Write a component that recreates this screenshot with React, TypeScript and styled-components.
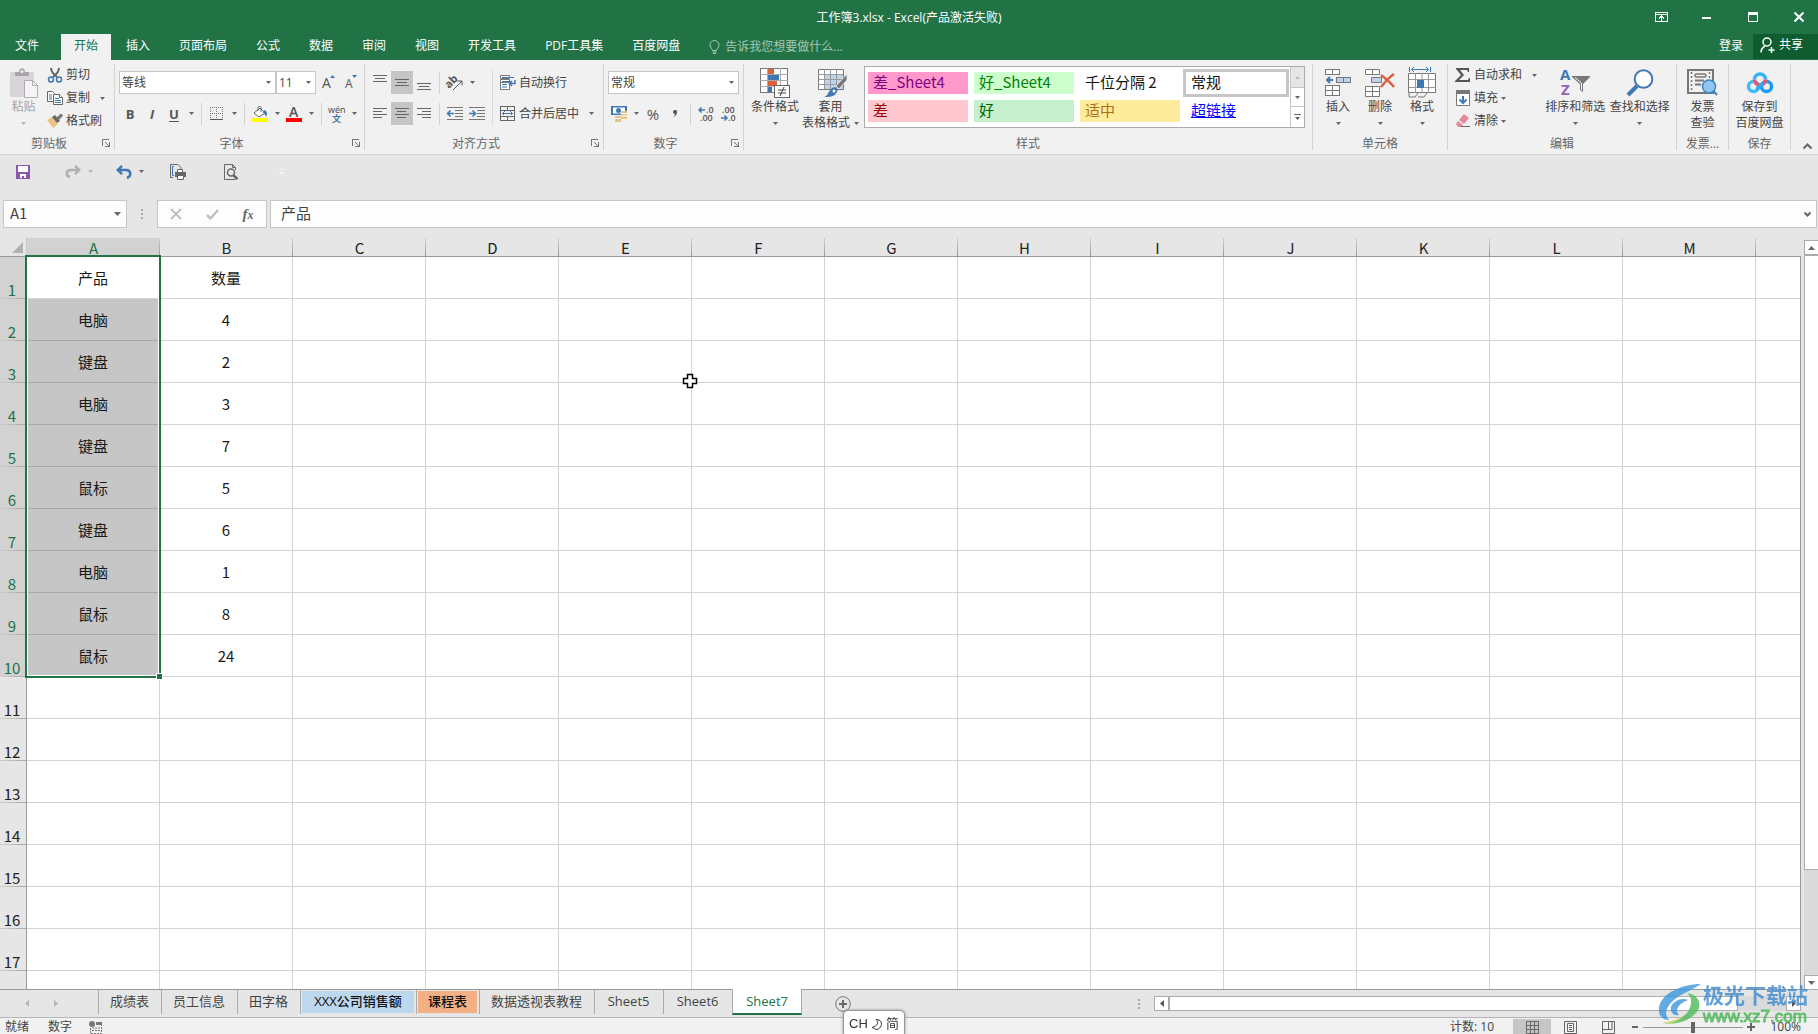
import React from "react";
import styled, { createGlobalStyle, css } from "styled-components";

const GlobalStyle = createGlobalStyle`
  *, *::before, *::after { box-sizing: border-box; }
  html, body { margin: 0; height: 100%; }
  body {
    overflow: hidden;
    background: #e6e6e6;
    color: #444;
    font-family: "Open Sans", "Noto Sans CJK SC", sans-serif;
    font-size: 12px;
    line-height: 16px;
  }
  button, input, select { font: inherit; color: inherit; }
  button { padding: 0; border: 0; background: none; white-space: nowrap; }
  svg { display: block; flex: none; overflow: visible; }
`;

const GREEN = "#217346";
const BLUE = "#3f78b3";
const INK = "#666";
const SHEET_FONT = `"Noto Sans CJK SC", "Open Sans", sans-serif`;

/* ---------- shared pieces ---------- */

const Window = styled.div`
  display: flex;
  flex-direction: column;
  height: 100vh;
  overflow: hidden;
`;

const CaretShape = styled.svg<{ $muted?: boolean }>`
  fill: ${(p) => (p.$muted ? "#b5b5b5" : "#666")};
`;

const Caret = ({ muted }: { muted?: boolean }) => (
  <CaretShape $muted={muted} width="5" height="3" viewBox="0 0 5 3" aria-hidden="true">
    <path d="M0 0h5L2.5 3z" />
  </CaretShape>
);

/* ---------- title bar and tabs ---------- */

const TitleBar = styled.header`
  flex: none;
  display: grid;
  grid-template-columns: 1fr auto 1fr;
  align-items: center;
  height: 34px;
  background: ${GREEN};
  color: #fff;
`;

const Title = styled.h1`
  grid-column: 2;
  margin: 0;
  padding-top: 2px;
  font-size: 12px;
  font-weight: 400;
`;

const WindowControls = styled.div`
  display: flex;
  justify-content: flex-end;
  gap: 8px;
`;

const WindowButton = styled.button`
  display: grid;
  place-items: center;
  width: 38px;
  height: 32px;
  color: #fff;
`;

const TabBar = styled.nav`
  flex: none;
  display: flex;
  gap: 1px;
  height: 26px;
  background: ${GREEN};
  color: #fff;
`;

const RibbonTab = styled.button<{ $active?: boolean; $first?: boolean }>`
  padding: 0 14px 2px;
  color: #fff;
  ${(p) =>
    p.$first &&
    css`
      width: 60px;
      padding-right: 20px;
    `}
  ${(p) =>
    p.$active &&
    css`
      padding-right: 13px;
      padding-left: 13px;
      background: #f1f1f1;
      color: ${GREEN};
    `}
`;

const TellMe = styled.label`
  flex: 1;
  display: flex;
  align-items: center;
  gap: 5px;
  padding-left: 14px;
  color: #a6c7b5;
`;

const TellMeInput = styled.input`
  width: 160px;
  padding: 0;
  border: 0;
  outline: 0;
  background: none;
  &::placeholder {
    color: #a6c7b5;
    opacity: 1;
  }
`;

const ShareButton = styled.button`
  display: flex;
  align-items: center;
  gap: 4px;
  width: 65px;
  height: 25px;
  margin-left: -5px;
  padding: 0 7px 3px;
  background: #0e5c2f;
  color: #fff;
`;

/* ---------- ribbon ---------- */

const Ribbon = styled.section`
  flex: none;
  display: flex;
  height: 95px;
  padding: 4px 0;
  border-bottom: 1px solid #d2d2d2;
  background: #f1f1f1;
`;

const Group = styled.section<{ $width?: number }>`
  display: flex;
  flex-direction: column;
  ${(p) => (p.$width ? `flex: none; width: ${p.$width}px;` : "flex: 1; min-width: 0;")}
  border-right: 1px solid #d2d2d2;
`;

const GroupBody = styled.div<{ $pad?: number }>`
  flex: 1;
  display: flex;
  padding: 0 ${(p) => p.$pad ?? 4}px;
`;

const GroupFooter = styled.div`
  display: flex;
  height: 14px;
  line-height: 16px;
  color: ${INK};
`;

const GroupLabel = styled.span`
  flex: 1;
  text-align: center;
`;

const LauncherButton = styled.button`
  width: 16px;
  display: grid;
  place-items: center;
`;

const RibbonGroup = ({
  label,
  width,
  launcher,
  pad,
  children,
}: {
  label: string;
  width?: number;
  launcher?: boolean;
  pad?: number;
  children: React.ReactNode;
}) => (
  <Group $width={width} aria-label={label}>
    <GroupBody $pad={pad}>{children}</GroupBody>
    <GroupFooter>
      <GroupLabel>{label}</GroupLabel>
      {launcher && (
        <LauncherButton aria-label={`${label}设置`}>
          <svg width="8" height="8" viewBox="0 0 8 8" fill="none" stroke="#777" shapeRendering="crispEdges">
            <path d="M.5 7V.5H7M3 3l4 4M7.500 3v4.500H3" />
          </svg>
        </LauncherButton>
      )}
    </GroupFooter>
  </Group>
);

const Stack = styled.div`
  display: flex;
  flex-direction: column;
  gap: 8px;
  padding-top: 7px;
`;

const Row = styled.div<{ $gap?: number }>`
  display: flex;
  align-items: center;
  gap: ${(p) => p.$gap ?? 0}px;
  height: 23px;
`;

const SmallStack = styled.div<{ $after?: number }>`
  display: flex;
  flex-direction: column;
  gap: 1px;
  margin-right: ${(p) => p.$after ?? 0}px;
  & > ${Row} {
    height: 22px;
  }
`;

const IconButton = styled.button<{ $on?: boolean }>`
  display: grid;
  place-items: center;
  width: 22px;
  height: 23px;
  background: ${(p) => (p.$on ? "#c5c5c5" : "none")};
`;

const CaretButton = styled.button`
  display: grid;
  place-items: center;
  width: 12px;
  height: 22px;
`;

const TextButton = styled.button<{ $short?: boolean }>`
  display: flex;
  align-items: center;
  gap: 3px;
  height: ${(p) => (p.$short ? 22 : 23)}px;
  padding: 0 3px;
`;

const Divider = styled.span`
  width: 1px;
  height: 22px;
  margin: 0 4px;
  background: #d2d2d2;
`;

const TallDivider = styled.span`
  width: 1px;
  height: 55px;
  margin: 6px 4px 0;
  background: #dadada;
`;

const BigButton = styled.button<{ $width: number; $muted?: boolean }>`
  display: flex;
  flex-direction: column;
  align-items: center;
  width: ${(p) => p.$width}px;
  padding-top: 2px;
  color: ${(p) => (p.$muted ? "#a6a6a6" : "#444")};
`;

const BigIcon = styled.span`
  display: grid;
  place-items: center;
  height: 33px;
`;

const BigLine = styled.span`
  display: flex;
  align-items: center;
  justify-content: center;
  gap: 4px;
  height: 16px;
`;

const Combo = styled.span<{ $width: number }>`
  display: grid;
  align-items: center;
  width: ${(p) => p.$width}px;
  & > select,
  & > svg {
    grid-area: 1 / 1;
  }
  & > svg {
    justify-self: end;
    margin-right: 5px;
    pointer-events: none;
  }
`;

const ComboSelect = styled.select`
  appearance: none;
  width: 100%;
  height: 23px;
  padding: 0 2px;
  border: 1px solid #c6c6c6;
  border-radius: 0;
  background: #fff;
`;

const ComboBox = ({ label, value, width }: { label: string; value: string; width: number }) => (
  <Combo $width={width}>
    <ComboSelect aria-label={label} defaultValue={value}>
      <option>{value}</option>
    </ComboSelect>
    <Caret />
  </Combo>
);

const Glyph = styled.span<{ $size: number; $bold?: boolean; $italic?: boolean; $under?: boolean }>`
  font-size: ${(p) => p.$size}px;
  line-height: 16px;
  font-weight: ${(p) => (p.$bold ? 700 : 400)};
  font-style: ${(p) => (p.$italic ? "italic" : "normal")};
  text-decoration: ${(p) => (p.$under ? "underline" : "none")};
  text-underline-offset: 2px;
  color: #555;
`;

/* ---------- style gallery ---------- */

const Gallery = styled.div`
  flex: 1;
  min-width: 0;
  display: flex;
  height: 62px;
  margin: 2px 3px 0 5px;
  border: 1px solid #ababab;
  background: #fff;
`;

const GalleryGrid = styled.div`
  flex: 1;
  min-width: 0;
  display: grid;
  grid-template-columns: repeat(4, 1fr);
  gap: 6px;
  padding: 5px 4px 5px 3px;
`;

const StyleItem = styled.button<{ $bg: string; $fg: string; $selected?: boolean; $link?: boolean }>`
  height: 22px;
  padding: 0 5px 2px;
  background: ${(p) => p.$bg};
  color: ${(p) => p.$fg};
  font-family: ${SHEET_FONT};
  font-size: 15px;
  line-height: 20px;
  text-align: left;
  text-decoration: ${(p) => (p.$link ? "underline" : "none")};
  outline: ${(p) => (p.$selected ? "3px solid #c6c6c6" : "0")};
`;

const GalleryScroll = styled.div`
  display: grid;
  grid-template-rows: 21px 19px 20px;
  width: 14px;
`;

const GalleryArrow = styled.button<{ $disabled?: boolean }>`
  display: grid;
  place-items: center;
  border-left: 1px solid #c6c6c6;
  border-bottom: 1px solid #c6c6c6;
  background: ${(p) => (p.$disabled ? "#e6e6e6" : "#fff")};
  &:last-child {
    border-bottom: 0;
  }
`;

const CollapseButton = styled.button`
  align-self: flex-end;
  width: 27px;
  height: 8px;
  padding-left: 5px;
  display: grid;
  place-items: center;
`;

/* ---------- quick access and formula bar ---------- */

const QuickBar = styled.div`
  flex: none;
  display: flex;
  align-items: center;
  height: 45px;
  padding: 0 12px 12px;
`;

const QuickItem = styled.div<{ $after: number }>`
  display: flex;
  align-items: center;
  margin-right: ${(p) => p.$after}px;
`;

const QuickButton = styled.button`
  display: grid;
  place-items: center;
  width: 22px;
  height: 22px;
`;

const FormulaBar = styled.div`
  flex: none;
  display: flex;
  height: 38px;
  padding: 0 1px 10px 3px;
`;

const NameBox = styled.div`
  display: flex;
  align-items: center;
  width: 124px;
  padding-right: 3px;
  border: 1px solid #c6c6c6;
  background: #fdfdfd;
`;

const BarInput = styled.input<{ $pad: number }>`
  flex: 1;
  min-width: 0;
  height: 26px;
  padding: 0 ${(p) => p.$pad}px 3px;
  border: 0;
  outline: 0;
  background: none;
  font-family: ${SHEET_FONT};
  font-size: 15px;
`;

const Grip = styled.span`
  display: grid;
  place-items: center;
  width: 30px;
`;

const EntryButtons = styled.div`
  display: flex;
  align-items: center;
  width: 110px;
  margin-right: 3px;
  border: 1px solid #c6c6c6;
  background: #fdfdfd;
`;

const EntryButton = styled.button`
  flex: 1;
  height: 26px;
  display: grid;
  place-items: center;
`;

const FormulaBox = styled(NameBox)`
  flex: 1;
  width: auto;
`;

const FxText = styled.span`
  font-family: "Liberation Serif", serif;
  font-size: 15px;
  font-style: italic;
  font-weight: 700;
  color: #666;
  & > small {
    font-size: 12px;
  }
`;

/* ---------- worksheet ---------- */

const SheetArea = styled.main`
  flex: 1;
  min-height: 0;
  display: flex;
  gap: 3px;
`;

const GridFrame = styled.div`
  position: relative;
  flex: 1;
  min-width: 0;
  overflow: hidden;
  border-bottom: 1px solid #999;
  &::after {
    content: "";
    position: absolute;
    inset: 18px 0 0 auto;
    width: 1px;
    background: #999;
  }
`;

const Sheet = styled.table`
  table-layout: fixed;
  width: 1889px;
  border-collapse: separate;
  border-spacing: 0;
  font-family: ${SHEET_FONT};
  font-size: 15px;
  line-height: 18px;
  color: #1a1a1a;
  th {
    font-weight: 400;
  }
  col:first-child {
    width: 27px;
  }
`;

const Corner = styled.th`
  height: 19px;
  padding: 0;
  border-right: 1px solid #c6c6c6;
  border-bottom: 1px solid #999;
  & > svg {
    margin-left: 12px;
  }
`;

const ColumnHead = styled.th<{ $active?: boolean }>`
  height: 19px;
  padding: 2px 0 0;
  border-bottom: 1px solid #999;
  background: linear-gradient(#d0d0d0, #999) right / 1px 100% no-repeat ${(p) => (p.$active ? "#d2d2d2" : "#e6e6e6")};
  color: ${(p) => (p.$active ? GREEN : "#222")};
  line-height: 16px;
`;

const RowHead = styled.th<{ $active?: boolean }>`
  height: 42px;
  padding: 0 2px 0 0;
  vertical-align: bottom;
  border-right: 1px solid #999;
  background: linear-gradient(90deg, #d0d0d0, #a5a5a5) bottom / 100% 1px no-repeat
    ${(p) => (p.$active ? "#d2d2d2" : "#e6e6e6")};
  color: ${(p) => (p.$active ? GREEN : "#222")};
`;

const Cell = styled.td<{ $selected?: boolean }>`
  height: 42px;
  padding: 0;
  border-right: 1px solid #d4d4d4;
  border-bottom: 1px solid ${(p) => (p.$selected ? "#a8a8a8" : "#d4d4d4")};
  background: ${(p) => (p.$selected ? "#c6c6c6" : "#fff")};
  text-align: center;
`;

const SelectionFrame = styled.div`
  position: absolute;
  left: 25px;
  top: 17px;
  width: 136px;
  height: 423px;
  border: 2px solid ${GREEN};
  box-shadow: inset 0 0 0 1px #fff;
  pointer-events: none;
  &::after {
    content: "";
    position: absolute;
    right: -4px;
    bottom: -4px;
    width: 7px;
    height: 7px;
    border: 1px solid #fff;
    background: ${GREEN};
  }
`;

const Pointer = styled.svg`
  position: absolute;
  left: 682px;
  top: 135px;
`;

const VerticalScroll = styled.div`
  flex: none;
  display: flex;
  flex-direction: column;
  width: 14px;
  padding-top: 2px;
  background: #dadada;
  box-shadow: inset 0 2px #e6e6e6;
`;

const ScrollArrow = styled.button`
  flex: none;
  display: grid;
  place-items: center;
  width: 15px;
  height: 15px;
  border: 1px solid #ababab;
  background: #fff;
`;

const VerticalThumb = styled.div`
  flex: 0 1 82%;
  width: 15px;
  border: 1px solid #ababab;
  background: #fff;
`;

const Spacer = styled.span`
  flex: 1;
`;

/* ---------- sheet tabs ---------- */

const TabStrip = styled.div`
  flex: none;
  display: flex;
  height: 28px;
  padding-right: 17px;
  border-bottom: 1px solid #b5b5b5;
`;

const SheetNav = styled.div`
  display: flex;
  align-items: center;
  gap: 25px;
  width: 99px;
  height: 24px;
  padding: 2px 25px 0;
  border-right: 1px solid #ababab;
`;

const SheetTab = styled.button<{ $fill?: string; $min?: number }>`
  height: 24px;
  min-width: ${(p) => p.$min ?? 63}px;
  padding: 0 2px 0 1px;
  border-right: 1px solid #ababab;
  font-size: 13px;
  line-height: 20px;
  color: ${(p) => (p.$fill ? "#111" : "#444")};
  & > span {
    display: block;
    height: 22px;
    padding: 0 10px;
    background: ${(p) => p.$fill ?? "none"};
    font-weight: ${(p) => (p.$fill ? 500 : 400)};
  }
`;

const ActiveSheetTab = styled.button`
  width: 70px;
  height: 26px;
  margin-top: -1px;
  margin-left: -1px;
  z-index: 1;
  border: 1px solid #ababab;
  border-top: 0;
  border-bottom: 2px solid ${GREEN};
  background: #fff;
  color: ${GREEN};
  font-size: 13px;
`;

const AddSheet = styled.button`
  width: 16px;
  margin-left: 33px;
`;

const HorizontalScroll = styled.div`
  display: flex;
  align-self: center;
  width: 647px;
  background: #dadada;
`;

const HorizontalThumb = styled.div`
  width: 569px;
  height: 15px;
  border: 1px solid #ababab;
  background: #fff;
`;

/* ---------- status bar ---------- */

const StatusBar = styled.footer`
  flex: none;
  display: flex;
  align-items: center;
  height: 16px;
  padding: 2px 17px 0 5px;
  background: #f1f1f1;
`;

const StatusText = styled.span<{ $after: number }>`
  margin-right: ${(p) => p.$after}px;
`;

const ViewButton = styled.button<{ $on?: boolean }>`
  display: grid;
  place-items: center;
  width: 38px;
  height: 16px;
  background: ${(p) => (p.$on ? "#c6c6c6" : "none")};
`;

const ZoomButton = styled.button`
  display: grid;
  place-items: center;
  width: 16px;
  height: 16px;
`;

const ZoomSlider = styled.input`
  appearance: none;
  width: 100px;
  height: 12px;
  margin: 0;
  background: linear-gradient(#999, #999) center / 100% 1px no-repeat;
  &::-webkit-slider-thumb {
    appearance: none;
    width: 4px;
    height: 11px;
    background: #666;
  }
`;

const ZoomValue = styled.span`
  width: 42px;
  text-align: right;
`;

/* ---------- floating items ---------- */

const ImeBadge = styled.div`
  position: fixed;
  left: 843px;
  bottom: -4px;
  z-index: 2;
  display: flex;
  align-items: center;
  justify-content: center;
  gap: 4px;
  width: 62px;
  height: 28px;
  border: 1px solid #999;
  border-radius: 5px;
  background: #fff;
  box-shadow: 0 0 3px #888;
  color: #333;
  font-family: "Liberation Sans", "Noto Sans CJK SC", sans-serif;
  font-size: 13px;
`;

const Watermark = styled.div`
  position: fixed;
  right: 10px;
  bottom: 8px;
  z-index: 3;
  display: flex;
  align-items: center;
  gap: 1px;
  opacity: 0.8;
  pointer-events: none;
`;

const WatermarkText = styled.div`
  display: flex;
  flex-direction: column;
  color: #3d8ad0;
  font-size: 21px;
  font-weight: 700;
  line-height: 26px;
`;

const WatermarkSite = styled.span`
  color: #46b552;
  font-family: "Liberation Sans", sans-serif;
  font-size: 17px;
  font-weight: 400;
  line-height: 18px;
  -webkit-text-stroke: 1px #46b552;
`;

/* ---------- icons ---------- */

const Lines = ({ rows, w = 14, h = 13 }: { rows: [number, number, number][]; w?: number; h?: number }) => (
  <svg width={w} height={h} fill="#666" shapeRendering="crispEdges" aria-hidden="true">
    {rows.map(([x, y, l], i) => (
      <rect key={i} x={x} y={y} width={l} height="1" />
    ))}
  </svg>
);

const PasteIcon = () => (
  <svg width="30" height="32" viewBox="0 0 30 32">
    <rect x="1" y="5" width="24" height="25" rx="1" fill="#d9d4d9" />
    <path d="M6 9V5h4c0-5 6-5 6 0h4v4z" fill="#a6a6a6" />
    <circle cx="13" cy="4.500" r="1.500" fill="#f1f1f1" />
    <path d="M15.500 13.500h8l5 5v12h-13z" fill="#f7f2f8" stroke="#b0abb0" />
    <path d="M23.500 13.500v5h5" fill="none" stroke="#b0abb0" />
  </svg>
);
const CutIcon = () => (
  <svg width="16" height="16" viewBox="0 0 16 16" fill="none">
    <path d="M4 1c0 3 1 5 6 9M12 1c0 3-1 5-6 9" stroke="#666" strokeWidth="2" />
    <circle cx="4" cy="12.500" r="2.500" stroke={BLUE} strokeWidth="1.500" />
    <circle cx="12" cy="12.500" r="2.500" stroke={BLUE} strokeWidth="1.500" />
  </svg>
);
const CopyIcon = () => (
  <svg width="16" height="16" viewBox="0 0 16 16" fill="#fff" stroke="#666">
    <path d="M.5 1.500h5l2 2v8h-7z" />
    <path d="M2 5h3M2 7h3M2 9h3" stroke={BLUE} />
    <path d="M6.500 4.500h6l3 3v7h-9z" />
    <path d="M12.500 4.500v3h3" />
    <path d="M8 8.500h4M8 10.500h6M8 12.500h6" stroke={BLUE} />
  </svg>
);
const BrushIcon = () => (
  <svg width="16" height="16" viewBox="0 0 16 16">
    <path d="M0 7l5-3 6 7-5 4z" fill="#eac282" />
    <path d="M5 4l3-2 5 6-3 2z" fill="#666" />
    <path d="M9 5l5-4.500 2 2L12 7z" fill="#777" />
  </svg>
);
const BordersIcon = () => (
  <svg width="14" height="14" viewBox="0 0 14 14" fill="none" stroke="#777" shapeRendering="crispEdges">
    <path d="M.5 0v13M6.500 0v13M12.500 0v13M0 .5h13M0 6.500h13" strokeDasharray="1 1" />
    <path d="M0 12.500h13" stroke="#555" />
  </svg>
);
const FillIcon = () => (
  <svg width="16" height="16" viewBox="0 0 16 16">
    <path d="M2 7l6-5 5 5-6 4z" fill="#fff" stroke="#666" />
    <path d="M6 5V1.500c0-1.500 3-1.500 3 0V6" fill="none" stroke="#666" />
    <path d="M12 4c3 1 4 3 2 7-1-3-2-4-3-4z" fill={BLUE} />
    <path d="M0 12h16v4H0z" fill="#ff0" />
  </svg>
);
const OrientationIcon = () => (
  <svg width="18" height="18" viewBox="0 0 18 18" fill="none" stroke="#555">
    <text x="0" y="12" fill="#555" stroke="none" fontSize="11" fontWeight="700" transform="rotate(-45 5 10)">ab</text>
    <path d="M7 16l9-9M11.500 7H16v4.500" />
  </svg>
);
const IndentIcon = ({ right }: { right?: boolean }) => (
  <svg width="16" height="13" viewBox="0 0 16 13">
    <path d="M0 .5h16M8 3.500h8M8 6.500h8M8 9.500h8M0 12.500h16" stroke="#777" shapeRendering="crispEdges" />
    <path d={right ? "M0 6.500h6M3.500 3.500l3 3-3 3" : "M7 6.500H1M3.500 3.500l-3 3 3 3"} stroke={BLUE} strokeWidth="1.500" fill="none" />
  </svg>
);
const WrapIcon = () => (
  <svg width="16" height="16" viewBox="0 0 16 16" fill="none">
    <path d="M.5.500h9v3h-9zM.5 4.500h9v3h-9zM.5 7.500h9v7h-9z" fill="#fff" stroke="#777" />
    <path d="M2 2.500h12M2 6.500h9M2 9.500h5M2 12h5" stroke={BLUE} />
    <path d="M15 5v3.500h-5M12 6l-2.500 2.500L12 11" stroke={BLUE} strokeWidth="1.500" />
  </svg>
);
const MergeIcon = () => (
  <svg width="16" height="16" viewBox="0 0 16 16" fill="none" shapeRendering="crispEdges">
    <path d="M.5.500h14v14H.5zM.5 4.500h14M.5 10.500h14M7.500.500v4M7.500 10.500v4" stroke="#666" />
    <path d="M3 7.500h9M4.500 5.500l-2 2 2 2M10.500 5.500l2 2-2 2" stroke={BLUE} />
  </svg>
);
const MoneyIcon = () => (
  <svg width="17" height="16" viewBox="0 0 17 16">
    <path d="M0 0h16v9H0z" fill={BLUE} />
    <path d="M2 1.500h12v6H2z" fill="#fff" />
    <circle cx="7.500" cy="4.500" r="2.500" fill={BLUE} />
    <path d="M10 5h6v8h-6zM4 10h6v6H4z" fill="#eac282" />
    <path d="M10 7.500h6M10 10h6M4 12.500h6" stroke="#fff" />
  </svg>
);
const DecimalIcon = ({ less }: { less?: boolean }) => (
  <svg width="17" height="16" viewBox="0 0 17 16" fontSize="9" fontWeight="600">
    <text x={less ? 2 : 8} y="7" fill="#555">{less ? ".00" : ".0"}</text>
    <text x={less ? 8 : 2} y="15" fill="#555">{less ? ".0" : ".00"}</text>
    <path
      d={less ? "M1 12h6M4.500 9.500L7 12l-2.500 2.500" : "M7 4H1M3.500 1.500L1 4l2.500 2.500"}
      stroke={BLUE}
      strokeWidth="1.500"
      fill="none"
    />
  </svg>
);
const ConditionalIcon = () => (
  <svg width="30" height="30" viewBox="0 0 30 30" shapeRendering="crispEdges">
    <path d="M.5.500h27v24H.5z" fill="#fff" stroke="#777" />
    <path d="M7.500 0v24M20.500 0v24M0 6.500h28M0 12.500h28M0 18.500h28" stroke="#aaa" />
    <path d="M8 1h6v5H8zM8 13h9v5H8z" fill="#d9603c" />
    <path d="M8 7h11v5H8zM8 19h4v5H8z" fill={BLUE} />
    <path d="M14.500 17.500h15v12h-15z" fill="#fff" stroke="#666" />
    <path d="M18 22h8M18 25h8M24 19l-4 9" stroke="#444" shapeRendering="auto" />
  </svg>
);
const TableFormatIcon = () => (
  <svg width="30" height="28" viewBox="0 0 30 28">
    <path d="M2.500.500h25v20H2.500z" fill="#fff" stroke="#777" />
    <path d="M9 6h18v14H9z" fill="#bfd3ea" />
    <path d="M8.500 0v20M14.500 0v20M20.500 0v20M2 5.500h25M2 10.500h25M2 15.500h25" stroke="#999" />
    <path d="M31 5v6l-8 9-3-3z" fill="#777" stroke="#f1f1f1" strokeWidth=".8" />
    <path d="M15 20c4-4 8 0 6 3-2 4-5 5-13 5 4-1 4-5 7-8z" fill={BLUE} />
    <circle cx="18" cy="22" r="1.500" fill="#fff" />
  </svg>
);
const InsertCellsIcon = () => (
  <svg width="27" height="28" viewBox="0 0 27 28" fill="#fff" stroke="#777" shapeRendering="crispEdges">
    <path d="M.5.500h14v5H.5zM7.500.500v5M.5 16.500h14v10H.5zM7.500 16.500v10M.5 21.500h14" />
    <path d="M11.500 8.500h14v5h-14zM18.500 8.500v5" fill="#bfd3ea" />
    <path d="M8 11H2M5 8l-3 3 3 3" fill="none" stroke={BLUE} strokeWidth="2" shapeRendering="auto" />
  </svg>
);
const DeleteCellsIcon = () => (
  <svg width="30" height="28" viewBox="0 0 30 28" fill="#fff" stroke="#777">
    <path d="M.5.500h14v5H.5zM7.500.500v5M.5 17.500h14v10H.5zM7.500 17.500v10M.5 22.500h14" />
    <path d="M6.500 8.500h10v5h-10z" fill="#bfd3ea" />
    <path d="M16 6c4 3 9 7 13 12M29 5c-5 3-9 8-13 13" fill="none" stroke="#d9603c" strokeWidth="2.500" />
  </svg>
);
const FormatCellsIcon = () => (
  <svg width="29" height="31" viewBox="0 0 29 31" fill="none" stroke="#777">
    <path d="M.5 6.500h27v19H.5z" fill="#fff" />
    <path d="M7.500 6v20M20.500 6v20M.5 12.500h27M.5 20.500h27M14 6v6M14 20v6" stroke="#999" />
    <path d="M9 13h7v8H9z" fill={BLUE} stroke="none" />
    <path d="M1 26v4h6l3-4M10 30h6l3-4" />
    <path d="M1.500 0v5M22.500 0v5M3 2.500h18M6 0L3.500 2.500 6 5M18 0l2.500 2.500L18 5" stroke={BLUE} />
  </svg>
);
const SumIcon = () => (
  <svg width="16" height="16" viewBox="0 0 16 16">
    <path d="M1 1h13v4h-1l-1-2H5l4 5-5 5h9l1-2h1v4H0v-1l6-6-5-6z" fill="#555" />
  </svg>
);
const FillDownIcon = () => (
  <svg width="16" height="16" viewBox="0 0 16 16" fill="none">
    <path d="M1.500.500h13v15h-13z" fill="#fff" stroke="#777" />
    <path d="M1 0h14v4H1z" fill="#777" />
    <path d="M8 6v7M4.500 9.500L8 13l3.500-3.500" stroke={BLUE} strokeWidth="2" />
  </svg>
);
const EraserIcon = () => (
  <svg width="16" height="16" viewBox="0 0 16 16">
    <path d="M9 1l5 4-5 6-5-4z" fill="#e58a9a" />
    <path d="M3 8l5 4-2 2H3L1 11z" fill="#e58a9a" />
    <path d="M6 13.500h9" stroke="#666" />
  </svg>
);
const SortIcon = () => (
  <svg width="30" height="30" viewBox="0 0 30 30" fontSize="15" fontWeight="700">
    <text x="0" y="12" fill={BLUE}>A</text>
    <text x="1" y="27" fill="#9460b8">Z</text>
    <path d="M12 8h18v1l-7 7v8l-3-2v-6l-8-7z" fill="#777" />
    <path d="M15 9.500l6.500 5.500v7" stroke="#fff" fill="none" />
  </svg>
);
const FindIcon = () => (
  <svg width="28" height="28" viewBox="0 0 28 28">
    <circle cx="17.500" cy="10" r="8.800" fill="#fff" stroke={BLUE} strokeWidth="2" />
    <path d="M11 17l-9 9" stroke={BLUE} strokeWidth="4" />
  </svg>
);
const InvoiceIcon = () => (
  <svg width="31" height="27" viewBox="0 0 31 27" fill="none" stroke="#777">
    <path d="M1 1h25v23H1z" strokeWidth="2" />
    <path d="M4.500 3v19M22.500 3v8" strokeDasharray="2 2" strokeWidth="1.500" />
    <rect x="8" y="5" width="11" height="3" rx="1.500" strokeWidth="1.500" />
    <path d="M8 11.500h9M8 15.500h6" strokeWidth="2" />
    <circle cx="22" cy="17.500" r="6.500" fill="#93c5f2" stroke="#3c86c0" strokeWidth="1.500" />
    <path d="M26.500 22l3.500 4" stroke="#3c86c0" strokeWidth="2" />
  </svg>
);
const CloudIcon = () => (
  <svg width="28" height="22" viewBox="0 0 28 22" fill="none" strokeWidth="3.500">
    <circle cx="7.500" cy="14.500" r="5" stroke="#41bdf5" />
    <circle cx="20.500" cy="14.500" r="5" stroke="#1a9bfa" />
    <path d="M8.500 7.500a5.500 5.500 0 0 1 11 0" stroke="#35b5f5" />
    <path d="M8.500 7.500a5.500 5.500 0 0 0 11 0" stroke="#f0516c" />
    <path d="M10.500 17.500L17 11" stroke="#2aa8fa" />
  </svg>
);
const UndoIcon = ({ redo }: { redo?: boolean }) => (
  <svg width="16" height="14" viewBox="0 0 16 14" fill="none" stroke={redo ? "#b0b0b0" : BLUE} strokeWidth="2.500">
    {redo ? (
      <path d="M14 5H6c-5 0-6 6-1 7M10 .8L14.200 5 10 9.200" />
    ) : (
      <path d="M2 5h8c5 0 6 6 1 8M6 .8L1.800 5 6 9.200" />
    )}
  </svg>
);

/* ---------- data ---------- */

const tabs = ["文件", "开始", "插入", "页面布局", "公式", "数据", "审阅", "视图", "开发工具", "PDF工具集", "百度网盘"];
const columns = ["A", "B", "C", "D", "E", "F", "G", "H", "I", "J", "K", "L", "M", ""];
const data: [string, string][] = [
  ["产品", "数量"],
  ["电脑", "4"],
  ["键盘", "2"],
  ["电脑", "3"],
  ["键盘", "7"],
  ["鼠标", "5"],
  ["键盘", "6"],
  ["电脑", "1"],
  ["鼠标", "8"],
  ["鼠标", "24"],
];
const styleItems = [
  { name: "差_Sheet4", bg: "#ff99cc", fg: "#800080" },
  { name: "好_Sheet4", bg: "#ccffcc", fg: "#008000" },
  { name: "千位分隔 2", bg: "#fff", fg: "#111" },
  { name: "常规", bg: "#fff", fg: "#111", selected: true },
  { name: "差", bg: "#ffc7ce", fg: "#9c0006" },
  { name: "好", bg: "#c6efce", fg: "#006100" },
  { name: "适中", bg: "#ffeb9c", fg: "#b07018" },
  { name: "超链接", bg: "#fff", fg: "#0000ff", link: true },
];
const sheets: { name: string; fill?: string; min?: number }[] = [
  { name: "成绩表" },
  { name: "员工信息" },
  { name: "田字格" },
  { name: "XXX公司销售额", fill: "#bdd7ee", min: 116 },
  { name: "课程表", fill: "#f4b084" },
  { name: "数据透视表教程" },
  { name: "Sheet5", min: 69 },
  { name: "Sheet6", min: 69 },
];

const Big = ({
  icon,
  lines,
  width,
  caret,
  muted,
}: {
  icon: React.ReactNode;
  lines: string[];
  width: number;
  caret?: boolean;
  muted?: boolean;
}) => (
  <BigButton $width={width} $muted={muted}>
    <BigIcon>{icon}</BigIcon>
    <BigLine>{lines[0]}</BigLine>
    <BigLine>
      {lines[1]}
      {caret && <Caret muted={muted} />}
    </BigLine>
  </BigButton>
);

/* ---------- sections ---------- */

const Header = () => (
  <>
    <TitleBar>
      <Title>工作簿3.xlsx - Excel(产品激活失败)</Title>
      <WindowControls>
        <WindowButton aria-label="功能区显示选项">
          <svg width="13" height="10" viewBox="0 0 13 10" fill="none" stroke="#fff" shapeRendering="crispEdges">
            <path d="M.5.500h12v9H.5zM0 2h13M6.500 4v5M4 6.500l2.500-2.500L9 6.500" />
          </svg>
        </WindowButton>
        <WindowButton aria-label="最小化">
          <svg width="10" height="4" viewBox="0 0 10 4">
            <path d="M0 2h9v2H0z" fill="#fff" />
          </svg>
        </WindowButton>
        <WindowButton aria-label="最大化">
          <svg width="10" height="10" viewBox="0 0 10 10" fill="none" stroke="#fff">
            <path d="M.5.500h9v9h-9z" />
            <path d="M0 1.500h10" strokeWidth="3" />
          </svg>
        </WindowButton>
        <WindowButton aria-label="关闭">
          <svg width="10" height="10" viewBox="0 0 10 10" stroke="#fff" strokeWidth="2">
            <path d="M.5.500l9 9M9.500.500l-9 9" />
          </svg>
        </WindowButton>
      </WindowControls>
    </TitleBar>
    <TabBar>
      {tabs.map((t, i) => (
        <RibbonTab key={t} $first={i === 0} $active={i === 1}>
          {t}
        </RibbonTab>
      ))}
      <TellMe>
        <svg width="11" height="14" viewBox="0 0 11 14" fill="none" stroke="#a6c7b5">
          <path d="M3.500 10.500c0-2-2.500-2.500-2.500-5.500a4.500 4.500 0 0 1 9 0c0 3-2.500 3.500-2.500 5.500zM3.500 12h4M4 13.500h3" />
        </svg>
        <TellMeInput aria-label="告诉我您想要做什么" placeholder="告诉我您想要做什么..." />
      </TellMe>
      <RibbonTab>登录</RibbonTab>
      <ShareButton>
        <svg width="15" height="16" viewBox="0 0 15 16" fill="none" stroke="#fff" strokeWidth="1.500">
          <circle cx="7" cy="5" r="4" />
          <path d="M1 15.500c0-3 1.500-5 4-6.500M11.500 10v6M8.500 13h6" />
        </svg>
        共享
      </ShareButton>
    </TabBar>
  </>
);

const RibbonArea = () => (
  <Ribbon>
    <RibbonGroup label="剪贴板" width={115} launcher pad={3}>
      <Big icon={<PasteIcon />} lines={["粘贴"]} width={41} caret muted />
      <SmallStack>
        <TextButton $short><CutIcon />剪切</TextButton>
        <Row $gap={3}>
          <TextButton $short><CopyIcon />复制</TextButton>
          <CaretButton aria-label="复制选项"><Caret /></CaretButton>
        </Row>
        <TextButton $short><BrushIcon />格式刷</TextButton>
      </SmallStack>
    </RibbonGroup>

    <RibbonGroup label="字体" width={250} launcher pad={4}>
      <Stack>
        <Row>
          <ComboBox label="字体" value="等线" width={157} />
          <ComboBox label="字号" value="11" width={40} />
          <IconButton aria-label="增大字号">
            <svg width="14" height="16" viewBox="0 0 14 16">
              <text x="2" y="13" fontSize="14" fill="#555">A</text>
              <path d="M10 3l2.500-3L15 3z" fill={BLUE} />
            </svg>
          </IconButton>
          <IconButton aria-label="减小字号">
            <svg width="14" height="16" viewBox="0 0 14 16">
              <text x="3" y="13" fontSize="12" fill="#555">A</text>
              <path d="M10 0h5l-2.500 3z" fill={BLUE} />
            </svg>
          </IconButton>
        </Row>
        <Row>
          <IconButton><Glyph $size={13} $bold>B</Glyph></IconButton>
          <IconButton><Glyph $size={13} $bold $italic>I</Glyph></IconButton>
          <IconButton><Glyph $size={13} $bold $under>U</Glyph></IconButton>
          <CaretButton aria-label="下划线选项"><Caret /></CaretButton>
          <Divider />
          <IconButton aria-label="边框"><BordersIcon /></IconButton>
          <CaretButton aria-label="边框选项"><Caret /></CaretButton>
          <Divider />
          <IconButton aria-label="填充颜色"><FillIcon /></IconButton>
          <CaretButton aria-label="填充颜色选项"><Caret /></CaretButton>
          <IconButton aria-label="字体颜色">
            <svg width="16" height="16" viewBox="0 0 16 16">
              <text x="3" y="11" fontSize="14" fontWeight="600" fill="#555">A</text>
              <path d="M0 12h16v4H0z" fill="#f00" />
            </svg>
          </IconButton>
          <CaretButton aria-label="字体颜色选项"><Caret /></CaretButton>
          <Divider />
          <IconButton aria-label="拼音">
            <svg width="18" height="18" viewBox="0 0 18 18">
              <text x="0" y="8" fontSize="9" fill="#444">wén</text>
              <text x="4" y="17" fontSize="9" fontWeight="700" fill={BLUE}>文</text>
            </svg>
          </IconButton>
          <CaretButton aria-label="拼音选项"><Caret /></CaretButton>
        </Row>
      </Stack>
    </RibbonGroup>

    <RibbonGroup label="对齐方式" width={239} launcher pad={4}>
      <Stack>
        <Row>
          <IconButton aria-label="顶端对齐"><Lines rows={[[0, 0, 14], [2, 3, 10], [0, 6, 14]]} h={15} /></IconButton>
          <IconButton aria-label="垂直居中" $on><Lines rows={[[0, 4, 14], [2, 7, 10], [0, 10, 14]]} h={15} /></IconButton>
          <IconButton aria-label="底端对齐"><Lines rows={[[0, 8, 14], [2, 11, 10], [0, 14, 14]]} h={15} /></IconButton>
          <Divider />
          <IconButton aria-label="方向"><OrientationIcon /></IconButton>
          <CaretButton aria-label="方向选项"><Caret /></CaretButton>
        </Row>
        <Row>
          <IconButton aria-label="左对齐"><Lines rows={[[0, 1, 14], [0, 4, 9], [0, 7, 14], [0, 10, 9]]} /></IconButton>
          <IconButton aria-label="居中" $on><Lines rows={[[0, 1, 14], [2, 4, 9], [0, 7, 14], [2, 10, 9]]} /></IconButton>
          <IconButton aria-label="右对齐"><Lines rows={[[0, 1, 14], [5, 4, 9], [0, 7, 14], [5, 10, 9]]} /></IconButton>
          <Divider />
          <IconButton aria-label="减少缩进量"><IndentIcon /></IconButton>
          <IconButton aria-label="增加缩进量"><IndentIcon right /></IconButton>
        </Row>
      </Stack>
      <TallDivider />
      <Stack>
        <Row><TextButton><WrapIcon />自动换行</TextButton></Row>
        <Row $gap={3}>
          <TextButton><MergeIcon />合并后居中</TextButton>
          <CaretButton aria-label="合并选项"><Caret /></CaretButton>
        </Row>
      </Stack>
    </RibbonGroup>

    <RibbonGroup label="数字" width={140} launcher pad={4}>
      <Stack>
        <Row><ComboBox label="数字格式" value="常规" width={131} /></Row>
        <Row>
          <IconButton aria-label="会计数字格式"><MoneyIcon /></IconButton>
          <CaretButton aria-label="会计数字格式选项"><Caret /></CaretButton>
          <IconButton><Glyph $size={15}>%</Glyph></IconButton>
          <IconButton aria-label="千位分隔样式">
            <svg width="8" height="10" viewBox="0 0 8 10">
              <path d="M4 1a2 2 0 1 0 0 4c0 1-1 2-2 3 3-1 4-3 4-5S5 1 4 1z" fill="#555" />
            </svg>
          </IconButton>
          <Divider />
          <IconButton aria-label="增加小数位数"><DecimalIcon /></IconButton>
          <IconButton aria-label="减少小数位数"><DecimalIcon less /></IconButton>
        </Row>
      </Stack>
    </RibbonGroup>

    <RibbonGroup label="样式" pad={4}>
      <Big icon={<ConditionalIcon />} lines={["条件格式"]} width={54} caret />
      <Big icon={<TableFormatIcon />} lines={["套用", "表格格式"]} width={57} caret />
      <Gallery>
        <GalleryGrid>
          {styleItems.map((s) => (
            <StyleItem key={s.name} $bg={s.bg} $fg={s.fg} $selected={s.selected} $link={s.link}>
              {s.name}
            </StyleItem>
          ))}
        </GalleryGrid>
        <GalleryScroll>
          <GalleryArrow $disabled aria-label="上一行">
            <svg width="5" height="3" viewBox="0 0 5 3"><path d="M0 3h5L2.500 0z" fill="#bbb" /></svg>
          </GalleryArrow>
          <GalleryArrow aria-label="下一行"><Caret /></GalleryArrow>
          <GalleryArrow aria-label="其他">
            <svg width="7" height="7" viewBox="0 0 7 7" fill="#666"><path d="M0 0h7v1H0zM1 3h5L3.500 6z" /></svg>
          </GalleryArrow>
        </GalleryScroll>
      </Gallery>
    </RibbonGroup>

    <RibbonGroup label="单元格" width={135} pad={4}>
      <Big icon={<InsertCellsIcon />} lines={["插入"]} width={42} caret />
      <Big icon={<DeleteCellsIcon />} lines={["删除"]} width={42} caret />
      <Big icon={<FormatCellsIcon />} lines={["格式"]} width={42} caret />
    </RibbonGroup>

    <RibbonGroup label="编辑" width={229} pad={4}>
      <SmallStack $after={3}>
        <Row $gap={3}>
          <TextButton $short><SumIcon />自动求和</TextButton>
          <CaretButton aria-label="求和选项"><Caret /></CaretButton>
        </Row>
        <TextButton $short><FillDownIcon />填充<Caret /></TextButton>
        <TextButton $short><EraserIcon />清除<Caret /></TextButton>
      </SmallStack>
      <Big icon={<SortIcon />} lines={["排序和筛选"]} width={65} caret />
      <Big icon={<FindIcon />} lines={["查找和选择"]} width={65} caret />
    </RibbonGroup>

    <RibbonGroup label="发票..." width={52} pad={4}>
      <Big icon={<InvoiceIcon />} lines={["发票", "查验"]} width={43} />
    </RibbonGroup>

    <RibbonGroup label="保存" width={62} pad={4}>
      <Big icon={<CloudIcon />} lines={["保存到", "百度网盘"]} width={53} />
    </RibbonGroup>

    <CollapseButton aria-label="折叠功能区">
      <svg width="9" height="6" viewBox="0 0 9 6" fill="none" stroke="#666" strokeWidth="2">
        <path d="M.5 5.500l4-4 4 4" />
      </svg>
    </CollapseButton>
  </Ribbon>
);

const Bars = () => (
  <>
    <QuickBar>
      <QuickItem $after={28}>
        <QuickButton aria-label="保存">
          <svg width="14" height="14" viewBox="0 0 14 14">
            <path d="M0 0h14v14H0z" fill="#8a57ac" />
            <path d="M2 1h10v6H2zM4 9h6v4H8v-2H6v2H4z" fill="#fff" />
          </svg>
        </QuickButton>
      </QuickItem>
      <QuickItem $after={17}>
        <QuickButton aria-label="恢复"><UndoIcon redo /></QuickButton>
        <CaretButton aria-label="恢复选项"><Caret muted /></CaretButton>
      </QuickItem>
      <QuickItem $after={20}>
        <QuickButton aria-label="撤消"><UndoIcon /></QuickButton>
        <CaretButton aria-label="撤消选项"><Caret /></CaretButton>
      </QuickItem>
      <QuickItem $after={31}>
        <QuickButton aria-label="快速打印">
          <svg width="16" height="16" viewBox="0 0 16 16" fill="none" stroke="#666">
            <path d="M3 13.500H.5V.500H8l3 3V6" />
            <path d="M4 2.500H2.500v9H4" stroke={BLUE} />
            <path d="M5 8h11v5H5z" fill="#666" stroke="none" />
            <path d="M7.500 8V5.500h5V8M7.500 11.500h6v4h-6z" fill="#fff" />
          </svg>
        </QuickButton>
      </QuickItem>
      <QuickItem $after={28}>
        <QuickButton aria-label="打印预览">
          <svg width="15" height="16" viewBox="0 0 15 16" fill="none" stroke="#666">
            <path d="M11.500 15.500H.5V.500h8l3 3V6M8.500.500v3h3" />
            <circle cx="7" cy="8.500" r="3.500" fill="#e6e6e6" strokeWidth="1.500" />
            <path d="M9.500 11.500l4 3.500" strokeWidth="2.500" />
          </svg>
        </QuickButton>
      </QuickItem>
      <QuickButton aria-label="自定义快速访问工具栏">
        <svg width="5" height="6" viewBox="0 0 5 6" fill="#f5f5f5"><path d="M0 0h5v1H0zM0 3h5L2.500 6z" /></svg>
      </QuickButton>
    </QuickBar>
    <FormulaBar>
      <NameBox>
        <BarInput aria-label="名称框" defaultValue="A1" $pad={6} />
        <CaretButton aria-label="名称列表">
          <svg width="7" height="4" viewBox="0 0 7 4" fill="#666"><path d="M0 0h7L3.500 4z" /></svg>
        </CaretButton>
      </NameBox>
      <Grip>
        <svg width="2" height="10" viewBox="0 0 2 10" fill="#aaa"><path d="M0 0h2v2H0zM0 4h2v2H0zM0 8h2v2H0z" /></svg>
      </Grip>
      <EntryButtons>
        <EntryButton aria-label="取消">
          <svg width="10" height="10" viewBox="0 0 10 10" stroke="#c0c0c0" strokeWidth="2"><path d="M0 0l10 10M10 0L0 10" /></svg>
        </EntryButton>
        <EntryButton aria-label="输入">
          <svg width="13" height="11" viewBox="0 0 13 11" fill="none" stroke="#c0c0c0" strokeWidth="2.500"><path d="M1 6l3.500 3.500L12 1" /></svg>
        </EntryButton>
        <EntryButton aria-label="插入函数"><FxText>f<small>x</small></FxText></EntryButton>
      </EntryButtons>
      <FormulaBox>
        <BarInput aria-label="编辑栏" defaultValue="产品" $pad={10} />
        <CaretButton aria-label="展开编辑栏">
          <svg width="7" height="5" viewBox="0 0 7 5" fill="none" stroke="#666" strokeWidth="2"><path d="M.5.500l3 3 3-3" /></svg>
        </CaretButton>
      </FormulaBox>
    </FormulaBar>
  </>
);

const Worksheet = () => (
  <SheetArea>
    <GridFrame>
      <Sheet>
        <colgroup>
          <col />
          {columns.map((c, i) => <col key={i} />)}
        </colgroup>
        <thead>
          <tr>
            <Corner aria-label="全选">
              <svg width="11" height="11" viewBox="0 0 11 11"><path d="M11 0v11H0z" fill="#b2b2b2" /></svg>
            </Corner>
            {columns.map((c, i) => <ColumnHead key={i} scope="col" $active={i === 0}>{c}</ColumnHead>)}
          </tr>
        </thead>
        <tbody>
          {Array.from({ length: 18 }, (_, r) => (
            <tr key={r}>
              <RowHead scope="row" $active={r < 10}>{r < 17 ? r + 1 : ""}</RowHead>
              {columns.map((c, i) => (
                <Cell key={i} $selected={i === 0 && r > 0 && r < 10}>{data[r]?.[i]}</Cell>
              ))}
            </tr>
          ))}
        </tbody>
      </Sheet>
      <SelectionFrame />
      <Pointer width="16" height="16" viewBox="0 0 16 16">
        <path d="M5.500 1.500h5v4h4v5h-4v4h-5v-4h-4v-5h4z" fill="#fff" stroke="#000" strokeWidth="1.500" />
      </Pointer>
    </GridFrame>
    <VerticalScroll>
      <ScrollArrow aria-label="向上滚动">
        <svg width="7" height="4" viewBox="0 0 7 4" fill="#666"><path d="M0 4h7L3.500 0z" /></svg>
      </ScrollArrow>
      <VerticalThumb />
      <Spacer />
      <ScrollArrow aria-label="向下滚动">
        <svg width="7" height="4" viewBox="0 0 7 4" fill="#666"><path d="M0 0h7L3.500 4z" /></svg>
      </ScrollArrow>
    </VerticalScroll>
  </SheetArea>
);

const Footer = () => (
  <>
    <TabStrip>
      <SheetNav>
        <svg width="4" height="7" viewBox="0 0 4 7" fill="#b5b5b5"><path d="M4 0v7L0 3.500z" /></svg>
        <svg width="4" height="7" viewBox="0 0 4 7" fill="#b5b5b5"><path d="M0 0v7l4-3.500z" /></svg>
      </SheetNav>
      {sheets.map((s) => (
        <SheetTab key={s.name} $fill={s.fill} $min={s.min}><span>{s.name}</span></SheetTab>
      ))}
      <ActiveSheetTab>Sheet7</ActiveSheetTab>
      <AddSheet aria-label="新工作表">
        <svg width="16" height="16" viewBox="0 0 16 16" fill="none" stroke="#777">
          <circle cx="8" cy="8" r="7.300" />
          <path d="M8 4v8M4 8h8" stroke="#666" strokeWidth="2" />
        </svg>
      </AddSheet>
      <Spacer />
      <Grip>
        <svg width="2" height="10" viewBox="0 0 2 10" fill="#aaa"><path d="M0 0h2v2H0zM0 4h2v2H0zM0 8h2v2H0z" /></svg>
      </Grip>
      <HorizontalScroll>
        <ScrollArrow aria-label="向左滚动">
          <svg width="4" height="7" viewBox="0 0 4 7" fill="#555"><path d="M4 0v7L0 3.500z" /></svg>
        </ScrollArrow>
        <HorizontalThumb />
        <Spacer />
        <ScrollArrow aria-label="向右滚动">
          <svg width="4" height="7" viewBox="0 0 4 7" fill="#555"><path d="M0 0v7l4-3.500z" /></svg>
        </ScrollArrow>
      </HorizontalScroll>
    </TabStrip>
    <StatusBar>
      <StatusText $after={19}>就绪</StatusText>
      <StatusText $after={17}>数字</StatusText>
      <svg width="13" height="13" viewBox="0 0 13 13" fill="#777">
        <circle cx="3" cy="3" r="3" />
        <path d="M7 1h6v3H7z" />
        <path d="M1.500 7v5.500h11V4M3 7h8M3 9.500h8" fill="none" stroke="#777" strokeDasharray="2 1" />
      </svg>
      <Spacer />
      <StatusText $after={19}>计数: 10</StatusText>
      <ViewButton aria-label="普通" $on>
        <svg width="13" height="13" viewBox="0 0 13 13" fill="none" stroke="#666"><path d="M.5.500h12v12H.5zM4.500 0v13M8.500 0v13M0 4.500h13M0 8.500h13" /></svg>
      </ViewButton>
      <ViewButton aria-label="页面布局视图">
        <svg width="13" height="13" viewBox="0 0 13 13" fill="none" stroke="#666"><path d="M.5.500h12v12H.5zM3.500 2.500h6v8h-6zM5 4.500h3M5 6.500h3M5 8.500h3" /></svg>
      </ViewButton>
      <ViewButton aria-label="分页预览">
        <svg width="13" height="13" viewBox="0 0 13 13" fill="none" stroke="#666"><path d="M.5.500h12v12H.5zM6.500 0v8M.5 8.500h9.500V0" /></svg>
      </ViewButton>
      <ZoomButton aria-label="缩小">
        <svg width="6" height="2" viewBox="0 0 6 2"><path d="M0 0h6v2H0z" fill="#666" /></svg>
      </ZoomButton>
      <ZoomSlider type="range" aria-label="显示比例" min={10} max={190} defaultValue={100} />
      <ZoomButton aria-label="放大">
        <svg width="8" height="8" viewBox="0 0 8 8"><path d="M0 3h8v2H0zM3 0h2v8H3z" fill="#666" /></svg>
      </ZoomButton>
      <ZoomValue>100%</ZoomValue>
    </StatusBar>
  </>
);

export default function App() {
  return (
    <Window>
      <GlobalStyle />
      <Header />
      <RibbonArea />
      <Bars />
      <Worksheet />
      <Footer />
      <ImeBadge>
        CH
        <svg width="10" height="11" viewBox="0 0 10 11" fill="none" stroke="#333">
          <path d="M4 .5c3 3 2 6-4 8 3 1 3 2 5 2 4-1 6-6 3-9C7 1 5 .5 4 .5z" />
        </svg>
        简
      </ImeBadge>
      <Watermark>
        <svg width="44" height="42" viewBox="0 0 44 42" fill="none">
          <path d="M43 1C24 1 3 10 1 25c-1 8 4 12 10 12-4-5-4-10 1-16C19 12 31 9 43 1z" fill="#3d98dc" />
          <path d="M29 10c14 2 16 15 7 22-8 7-19 10-31 8 13-2 22-6 26-13 4-8 2-14-2-17z" fill="#4dbb58" />
          <path d="M30 17c-6-3-15 1-17 7-1 6 3 9 8 8-4-4-2-11 9-15z" fill="#3d98dc" />
          <path d="M5 40c11 1 17-3 21-8-6 5-12 6-21 8z" fill="#e5cf40" />
        </svg>
        <WatermarkText>
          极光下载站
          <WatermarkSite>www.xz7.com</WatermarkSite>
        </WatermarkText>
      </Watermark>
    </Window>
  );
}
